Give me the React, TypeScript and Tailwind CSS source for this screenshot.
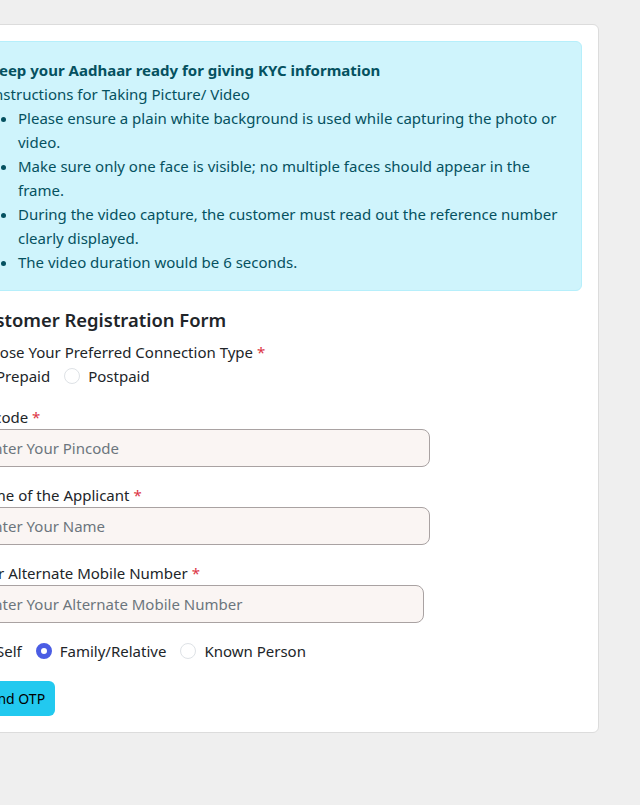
import React from "react";

const font = { fontFamily: '"Noto Sans", "Segoe UI", sans-serif' };

function Radio({ label, checked }: { label: string; checked?: boolean }) {
  return (
    <label className="flex items-center mr-[14px]">
      {checked ? (
        <span className="w-4 h-4 rounded-full border-[5px] border-[#4b5de4] bg-white" />
      ) : (
        <span className="w-4 h-4 rounded-full border border-[#dee2e6] bg-white" />
      )}
      <span className="ml-2">{label}</span>
    </label>
  );
}

function Field({ label, placeholder, width }: { label: string; placeholder: string; width: string }) {
  return (
    <div className="mb-4">
      <div className="leading-6">
        {label} <span className="text-[#dc3545]">*</span>
      </div>
      <div
        className={`${width} h-[38px] flex items-center px-3 border border-[#a9a2a2] rounded-lg bg-[#faf5f3] text-[#6c757d]`}
      >
        {placeholder}
      </div>
    </div>
  );
}

export default function App() {
  return (
    <div className="min-h-screen bg-[#efefef] overflow-hidden pt-6 text-[15px] text-[#212529]" style={font}>
      <div className="-ml-[45px] w-[644px] bg-white border border-[#dcdcdc] rounded-md p-4">
        <div className="bg-[#cff4fc] border border-[#b6effb] rounded-md p-4 text-[#055160] leading-6 mb-4">
          <div className="font-bold">Keep your Aadhaar ready for giving KYC information</div>
          <div>Instructions for Taking Picture/ Video</div>
          <ul className="list-disc pl-[29px]">
            <li>Please ensure a plain white background is used while capturing the photo or video.</li>
            <li>Make sure only one face is visible; no multiple faces should appear in the frame.</li>
            <li>During the video capture, the customer must read out the reference number clearly displayed.</li>
            <li>The video duration would be 6 seconds.</li>
          </ul>
        </div>

        <h5 className="text-[18.4px] font-semibold leading-[26px] mb-[7px]">Customer Registration Form</h5>

        <div className="mb-[17px]">
          <div className="leading-6">
            Choose Your Preferred Connection Type <span className="text-[#dc3545]">*</span>
          </div>
          <div className="flex leading-6">
            <Radio label="Prepaid" />
            <Radio label="Postpaid" />
          </div>
        </div>

        <Field label="Pincode" placeholder="Enter Your Pincode" width="w-[458px]" />
        <Field label="Name of the Applicant" placeholder="Enter Your Name" width="w-[458px]" />
        <Field label="Your Alternate Mobile Number" placeholder="Enter Your Alternate Mobile Number" width="w-[452px]" />

        <div className="flex leading-6 mb-[18px]">
          <Radio label="Self" />
          <Radio label="Family/Relative" checked />
          <Radio label="Known Person" />
        </div>

        <button className="w-[83px] h-[35px] rounded-md bg-[#22c9ef] text-black text-[14px]">Send OTP</button>
      </div>
    </div>
  );
}
